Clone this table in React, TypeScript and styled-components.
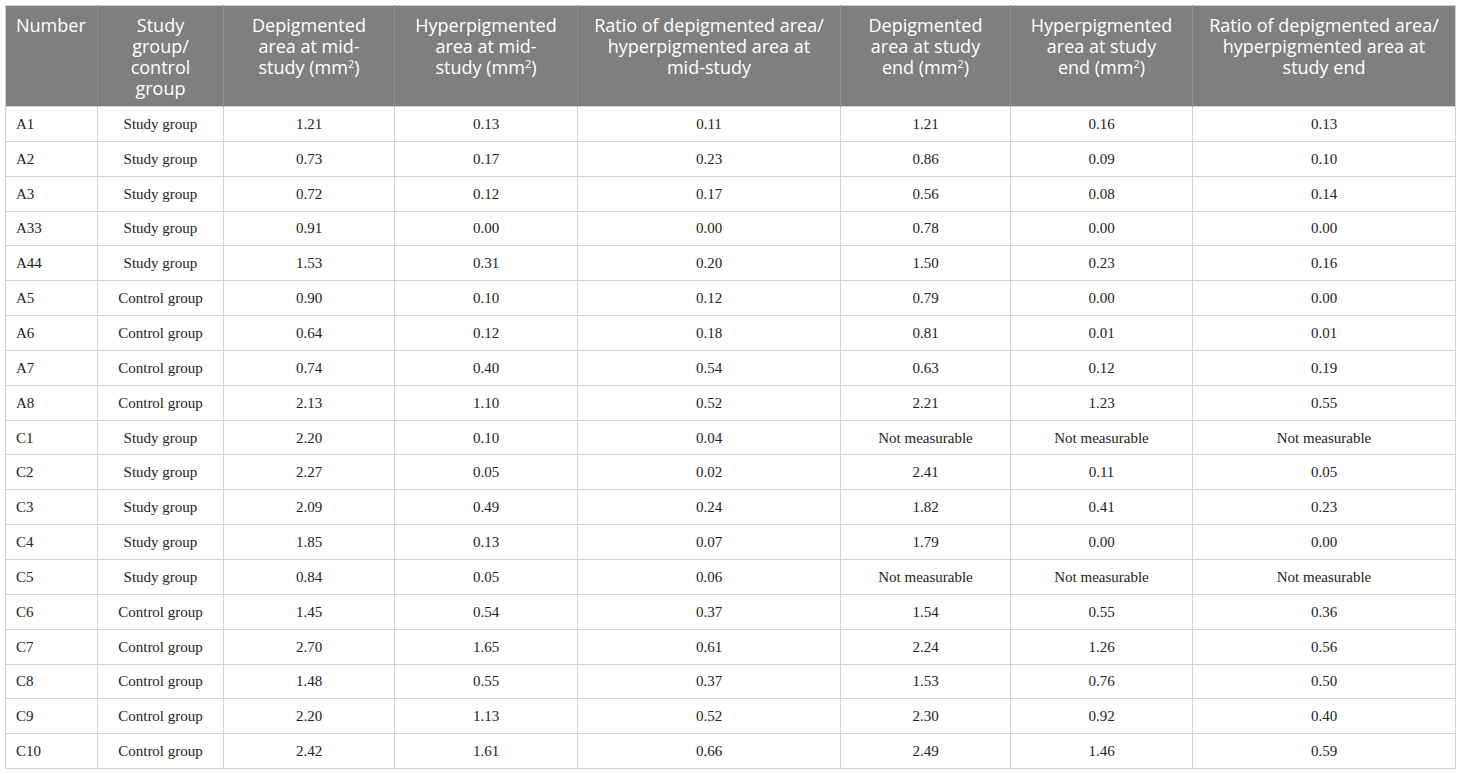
import React from "react";
import styled, { createGlobalStyle } from "styled-components";

const GlobalStyle = createGlobalStyle`
    html, body {
        margin: 0;
        padding: 0;
        background: #ffffff;
    }
`;

interface Row {
    id: string;
    group: string;
    values: string[];
}

const NM = "Not measurable";

const ROWS: Row[] = [
    { id: "A1", group: "Study group", values: ["1.21", "0.13", "0.11", "1.21", "0.16", "0.13"] },
    { id: "A2", group: "Study group", values: ["0.73", "0.17", "0.23", "0.86", "0.09", "0.10"] },
    { id: "A3", group: "Study group", values: ["0.72", "0.12", "0.17", "0.56", "0.08", "0.14"] },
    { id: "A33", group: "Study group", values: ["0.91", "0.00", "0.00", "0.78", "0.00", "0.00"] },
    { id: "A44", group: "Study group", values: ["1.53", "0.31", "0.20", "1.50", "0.23", "0.16"] },
    { id: "A5", group: "Control group", values: ["0.90", "0.10", "0.12", "0.79", "0.00", "0.00"] },
    { id: "A6", group: "Control group", values: ["0.64", "0.12", "0.18", "0.81", "0.01", "0.01"] },
    { id: "A7", group: "Control group", values: ["0.74", "0.40", "0.54", "0.63", "0.12", "0.19"] },
    { id: "A8", group: "Control group", values: ["2.13", "1.10", "0.52", "2.21", "1.23", "0.55"] },
    { id: "C1", group: "Study group", values: ["2.20", "0.10", "0.04", NM, NM, NM] },
    { id: "C2", group: "Study group", values: ["2.27", "0.05", "0.02", "2.41", "0.11", "0.05"] },
    { id: "C3", group: "Study group", values: ["2.09", "0.49", "0.24", "1.82", "0.41", "0.23"] },
    { id: "C4", group: "Study group", values: ["1.85", "0.13", "0.07", "1.79", "0.00", "0.00"] },
    { id: "C5", group: "Study group", values: ["0.84", "0.05", "0.06", NM, NM, NM] },
    { id: "C6", group: "Control group", values: ["1.45", "0.54", "0.37", "1.54", "0.55", "0.36"] },
    { id: "C7", group: "Control group", values: ["2.70", "1.65", "0.61", "2.24", "1.26", "0.56"] },
    { id: "C8", group: "Control group", values: ["1.48", "0.55", "0.37", "1.53", "0.76", "0.50"] },
    { id: "C9", group: "Control group", values: ["2.20", "1.13", "0.52", "2.30", "0.92", "0.40"] },
    { id: "C10", group: "Control group", values: ["2.42", "1.61", "0.66", "2.49", "1.46", "0.59"] },
];

const WIDTHS = [92, 126, 171, 183, 263, 170, 182, 263];

const Sq = () => <sup>2</sup>;

// header lines break where the printed table breaks them
const HEADERS: React.ReactNode[] = [
    "Number",
    <>Study<br />group/<br />control<br />group</>,
    <>Depigmented<br />area at mid-<br />study (mm<Sq />)</>,
    <>Hyperpigmented<br />area at mid-<br />study (mm<Sq />)</>,
    <>Ratio of depigmented area/<br />hyperpigmented area at<br />mid-study</>,
    <>Depigmented<br />area at study<br />end (mm<Sq />)</>,
    <>Hyperpigmented<br />area at study<br />end (mm<Sq />)</>,
    <>Ratio of depigmented area/<br />hyperpigmented area at<br />study end</>,
];

const App: React.FC = () => {
    return (
        <Page>
            <GlobalStyle />
            <Table>
                <colgroup>
                    {WIDTHS.map((w, i) => (
                        <col key={i} style={{ width: w }} />
                    ))}
                </colgroup>
                <thead>
                    <tr>
                        {HEADERS.map((h, i) => (
                            <HeadCell key={i} align={i === 0 ? "left" : "center"}>
                                {h}
                            </HeadCell>
                        ))}
                    </tr>
                </thead>
                <tbody>
                    {ROWS.map((row) => (
                        <BodyRow key={row.id}>
                            <Cell align="left">{row.id}</Cell>
                            <Cell align="center">{row.group}</Cell>
                            {row.values.map((v, i) => (
                                <Cell key={i} align="center">
                                    {v}
                                </Cell>
                            ))}
                        </BodyRow>
                    ))}
                </tbody>
            </Table>
        </Page>
    );
};

interface AlignProps {
    align: "left" | "center";
}

const Page = styled.div`
    padding: 5px;
`;

const Table = styled.table`
    width: 1450px;
    table-layout: fixed;
    border-collapse: collapse;
    border: 1px solid #cfcfcf;
`;

const HeadCell = styled.th<AlignProps>`
    background-color: #7f7f7f;
    color: #ffffff;
    font-family: "Open Sans", "Noto Sans", sans-serif;
    font-weight: 400;
    font-size: 18px;
    line-height: 21px;
    height: 101px;
    box-sizing: border-box;
    vertical-align: top;
    white-space: nowrap;
    text-align: ${({ align }) => align};
    padding: 9px 6px 0 10px;
    border-left: 1px solid #8e8e8e;

    &:not(:first-child) {
        padding-left: 6px;
    }

    &:first-child {
        border-left: none;
    }

    sup {
        font-size: 11px;
        line-height: 1;
        vertical-align: 6px;
    }
`;

const BodyRow = styled.tr`
    height: 34.85px;
`;

const Cell = styled.td<AlignProps>`
    font-family: "Liberation Serif", "Times New Roman", serif;
    font-size: 15px;
    color: #222222;
    text-align: ${({ align }) => align};
    vertical-align: middle;
    padding: 1px 10px 0 10px;
    border: 1px solid #d3d3d3;
`;

export default App;
